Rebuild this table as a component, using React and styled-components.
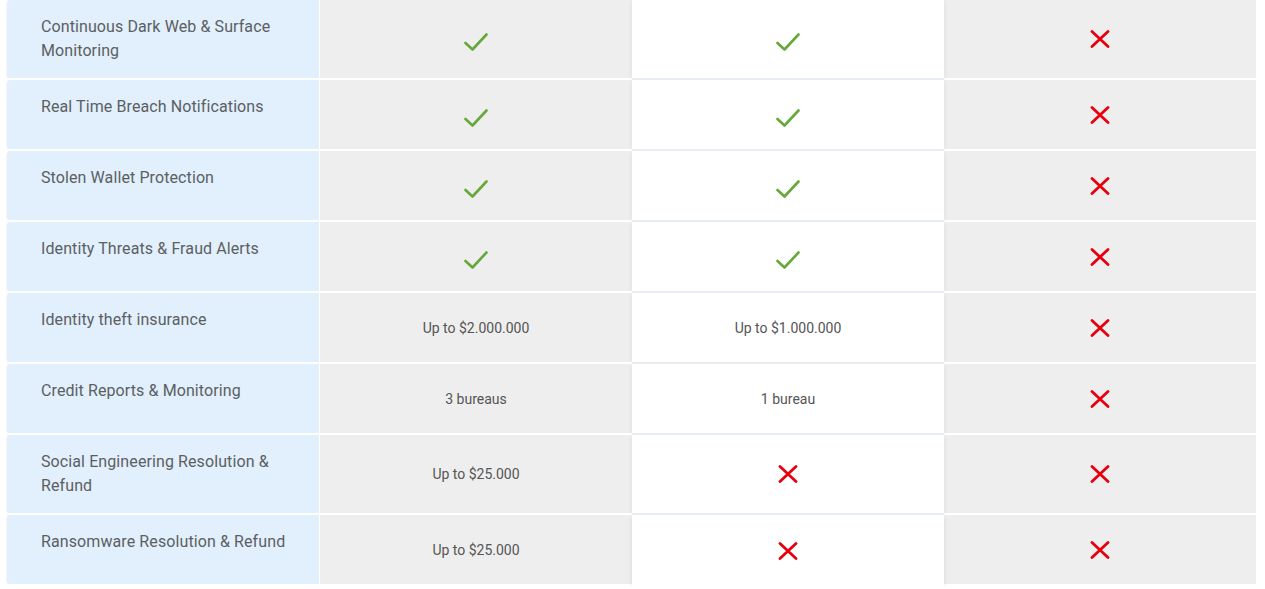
import React from "react";
import styled, { createGlobalStyle } from "styled-components";

const GlobalStyle = createGlobalStyle`
body {
  margin: 0;
  background: #ffffff;
  font-family: Roboto, "Liberation Sans", Arial, sans-serif;
}
`

const Table = styled.div`
display: flex;
flex-direction: column;
padding: 0 9px 0 7px;
`

const Row = styled.div`
display: grid;
grid-template-columns: 313px 312px 312px 312px;
`

const bg = {
  label: "#e2effc",
  gray: "#eeeeee",
  white: "#ffffff",
}

const Cell = styled.div`
box-sizing: border-box;
min-height: 71px;
display: flex;
align-items: center;
justify-content: center;
background: ${p => bg[p.$kind]};
border-bottom: 2px solid ${p => (p.$kind === "white" ? "#e9eef4" : "#ffffff")};
position: relative;
${p => p.$kind === "white" && `
  z-index: 1;
  box-shadow: -3px 0 4px -2px rgba(0,0,0,0.06), 3px 0 4px -2px rgba(0,0,0,0.06);
`}
${p => p.$last && p.$kind === "white" && `
  border-bottom: 2px solid #ffffff;
  margin-bottom: -2px;
  box-shadow: -3px 0 4px -2px rgba(0,0,0,0.06), 3px 0 4px -2px rgba(0,0,0,0.06), 0 3px 4px -2px rgba(0,0,0,0.08);
`}
`

const LabelCell = styled(Cell)`
align-items: flex-start;
justify-content: flex-start;
padding: 15px 24px 15px 34px;
margin-right: 1px;
border-radius: 4px 0 0 4px;
box-shadow: -1px 0 2px rgba(0,0,0,0.04);
`

const Label = styled.span`
font-size: 16px;
line-height: 24px;
letter-spacing: 0.1px;
color: #5b5f63;
`

const Value = styled.span`
font-size: 14px;
line-height: 20px;
color: #555555;
`

const CheckIcon = styled.svg`
width: 24px;
height: 20px;
margin-top: 6px;
`

const CrossIcon = styled.svg`
width: 20px;
height: 18px;
`

const Check = () => (
  <CheckIcon viewBox="0 0 24 20" fill="none">
    <path d="M1.5 11 L8.5 17.5 L22.5 2.5" stroke="#66a83a" strokeWidth="2.6" strokeLinecap="round" strokeLinejoin="round" />
  </CheckIcon>
)

const Cross = () => (
  <CrossIcon viewBox="0 0 20 18" fill="none">
    <path d="M2 1.5 L18 16.5 M18 1.5 L2 16.5" stroke="#e8000f" strokeWidth="2.8" strokeLinecap="round" />
  </CrossIcon>
)

const rows = [
  ["Continuous Dark Web & Surface Monitoring", "check", "check", "x"],
  ["Real Time Breach Notifications", "check", "check", "x"],
  ["Stolen Wallet Protection", "check", "check", "x"],
  ["Identity Threats & Fraud Alerts", "check", "check", "x"],
  ["Identity theft insurance", "Up to $2.000.000", "Up to $1.000.000", "x"],
  ["Credit Reports & Monitoring", "3 bureaus", "1 bureau", "x"],
  ["Social Engineering Resolution & Refund", "Up to $25.000", "x", "x"],
  ["Ransomware Resolution & Refund", "Up to $25.000", "x", "x"],
]

const renderValue = v => {
  if (v === "check") return <Check />
  if (v === "x") return <Cross />
  return <Value>{v}</Value>
}

const kinds = ["gray", "white", "gray"]

const App = () => {
  return (
    <>
      <GlobalStyle />
      <Table>
        {rows.map((r, i) => {
          const last = i === rows.length - 1
          return (
            <Row key={i}>
              <LabelCell $kind="label" $last={last}>
                <Label>{r[0]}</Label>
              </LabelCell>
              {r.slice(1).map((v, j) => (
                <Cell key={j} $kind={kinds[j]} $last={last}>
                  {renderValue(v)}
                </Cell>
              ))}
            </Row>
          );
        })}
      </Table>
    </>
  );
};

export default App;
